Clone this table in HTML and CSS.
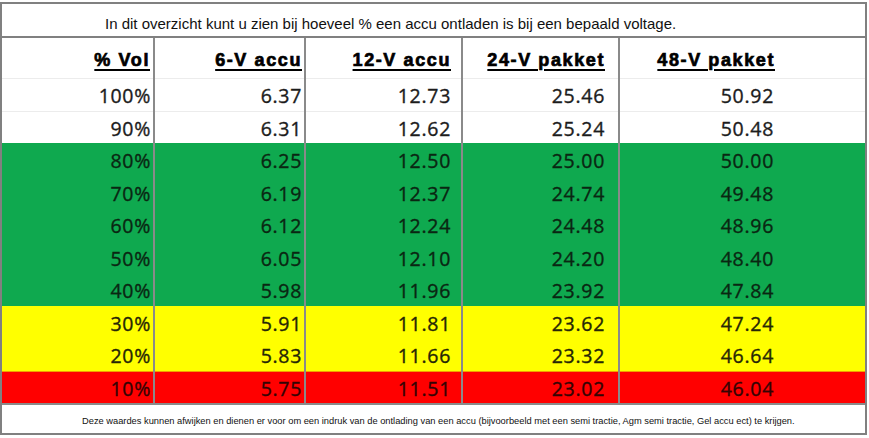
FILE: index.html
```html
<!DOCTYPE html>
<html lang="nl">
<head>
<meta charset="utf-8">
<title>Accu ontlading</title>
<link rel="stylesheet" href="styles.css">
</head>
<body>
<div class="frame">
  <div class="title">In dit overzicht kunt u zien bij hoeveel % een accu ontladen is bij een bepaald voltage.</div>
  <div class="table">
    <div class="row head">
      <div class="cell c1"><span>% Vol</span></div>
      <div class="cell c2"><span>6-V accu</span></div>
      <div class="cell c3"><span>12-V accu</span></div>
      <div class="cell c4"><span>24-V pakket</span></div>
      <div class="cell c5"><span>48-V pakket</span></div>
    </div>
    <div class="row w line">
      <div class="cell c1">100%</div><div class="cell c2">6.37</div><div class="cell c3">12.73</div><div class="cell c4">25.46</div><div class="cell c5">50.92</div>
    </div>
    <div class="row w line">
      <div class="cell c1">90%</div><div class="cell c2">6.31</div><div class="cell c3">12.62</div><div class="cell c4">25.24</div><div class="cell c5">50.48</div>
    </div>
    <div class="row g">
      <div class="cell c1">80%</div><div class="cell c2">6.25</div><div class="cell c3">12.50</div><div class="cell c4">25.00</div><div class="cell c5">50.00</div>
    </div>
    <div class="row g">
      <div class="cell c1">70%</div><div class="cell c2">6.19</div><div class="cell c3">12.37</div><div class="cell c4">24.74</div><div class="cell c5">49.48</div>
    </div>
    <div class="row g">
      <div class="cell c1">60%</div><div class="cell c2">6.12</div><div class="cell c3">12.24</div><div class="cell c4">24.48</div><div class="cell c5">48.96</div>
    </div>
    <div class="row g">
      <div class="cell c1">50%</div><div class="cell c2">6.05</div><div class="cell c3">12.10</div><div class="cell c4">24.20</div><div class="cell c5">48.40</div>
    </div>
    <div class="row g">
      <div class="cell c1">40%</div><div class="cell c2">5.98</div><div class="cell c3">11.96</div><div class="cell c4">23.92</div><div class="cell c5">47.84</div>
    </div>
    <div class="row y">
      <div class="cell c1">30%</div><div class="cell c2">5.91</div><div class="cell c3">11.81</div><div class="cell c4">23.62</div><div class="cell c5">47.24</div>
    </div>
    <div class="row y">
      <div class="cell c1">20%</div><div class="cell c2">5.83</div><div class="cell c3">11.66</div><div class="cell c4">23.32</div><div class="cell c5">46.64</div>
    </div>
    <div class="row r">
      <div class="cell c1">10%</div><div class="cell c2">5.75</div><div class="cell c3">11.51</div><div class="cell c4">23.02</div><div class="cell c5">46.04</div>
    </div>
  </div>
  <div class="footer">Deze waardes kunnen afwijken en dienen er voor om een indruk van de ontlading van een accu (bijvoorbeeld met een semi tractie, Agm semi tractie, Gel accu ect) te krijgen.</div>
</div>
</body>
</html>
```
FILE: styles.css
```css
html, body {
  margin: 0;
  padding: 0;
  background: #ffffff;
}

.frame {
  box-sizing: border-box;
  width: 867px;
  margin-top: 2px;
  border: 2px solid #808080;
  background: #ffffff;
}

.title {
  box-sizing: border-box;
  height: 34px;
  padding: 8px 0 0 103px;
  line-height: 24px;
  font-family: "Liberation Sans", Arial, sans-serif;
  font-size: 15px;
  color: #111111;
  border-bottom: 2px solid #808080;
  white-space: nowrap;
}

.table {
  display: flex;
  flex-direction: column;
}

.row {
  display: grid;
  grid-template-columns: 151px 151px 157px 157px 247px;
  height: 32.5px;
  font-family: "Open Sans", "Noto Sans", sans-serif;
  font-size: 19.5px;
  line-height: 19px;
  letter-spacing: 0.7px;
  -webkit-text-stroke: 0.35px currentColor;
}

.row.head {
  height: 40px;
  font-family: "Liberation Sans", Arial, sans-serif;
  font-weight: bold;
  font-size: 18px;
  line-height: 20px;
  letter-spacing: 1.6px;
  color: #000000;
  -webkit-text-stroke: 0;
}

.row.head .cell {
  padding-top: 12px;
}

.row.head span {
  text-decoration: underline;
  text-decoration-thickness: 2px;
  text-underline-offset: 3px;
  -webkit-text-stroke: 0.7px #000000;
}

.cell {
  box-sizing: border-box;
  display: flex;
  justify-content: flex-end;
  align-items: flex-start;
  padding-top: 8px;
  white-space: nowrap;
}

.cell + .cell {
  border-left: 2px solid #8a8a8a;
}

.c1 { padding-right: 2px; }
.c2 { padding-right: 2px; }
.c3 { padding-right: 10px; }
.c4 { padding-right: 13px; }
.c5 { padding-right: 91px; }

.row.head .c1 { padding-right: 3px; }
.row.head .c2 { padding-right: 2px; }
.row.head .c3 { padding-right: 10px; }
.row.head .c4 { padding-right: 13px; }
.row.head .c5 { padding-right: 90px; }

.row.w {
  background: #ffffff;
  color: #1c1c1c;
}

.row.line {
  box-shadow: inset 0 1px 0 #ececec;
}

.row.g {
  background: #0fa94f;
  color: #0a2612;
}

.row.y {
  background: #ffff00;
  color: #262606;
}

.row.r {
  background: #ff0000;
  color: #330404;
  box-shadow: inset 0 1px 0 #f2a000;
}

.footer {
  box-sizing: border-box;
  height: 30px;
  padding: 10px 0 0 80px;
  border-top: 2px solid #8a8a8a;
  font-family: "Liberation Sans", Arial, sans-serif;
  font-size: 9.3px;
  line-height: 12px;
  color: #111111;
  white-space: nowrap;
}
```
